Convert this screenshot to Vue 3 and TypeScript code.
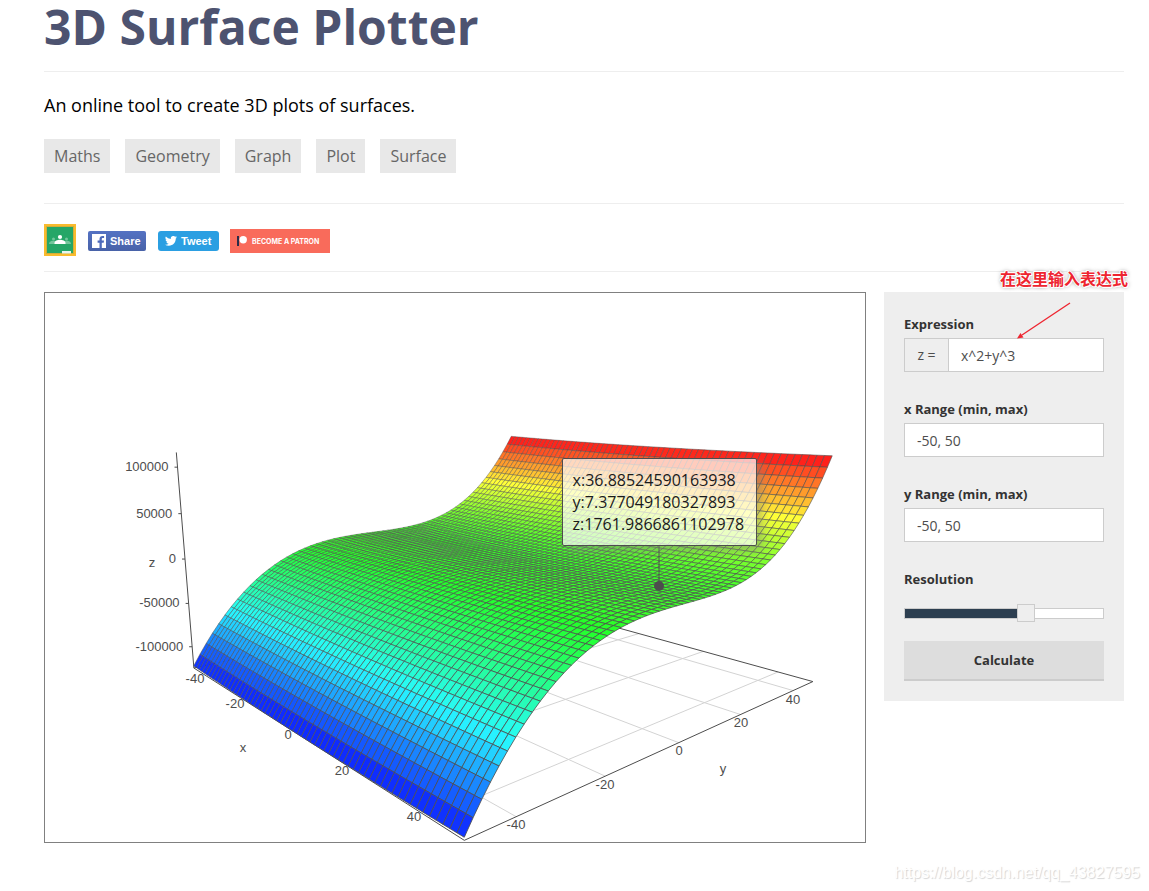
<script setup lang="ts">
import { computed, ref } from 'vue'

type Point = { x: number; y: number; depth: number }
type Cell = { points: string; fill: string; width: number; order: number }
type Line = { x1: number; y1: number; x2: number; y2: number }

const tags = ['Maths', 'Geometry', 'Graph', 'Plot', 'Surface']

const expression = ref('x^2+y^3')
const xRange = ref('-50, 50')
const yRange = ref('-50, 50')
const resolution = ref(62)

const fillStyle = computed(() => ({ '--fill': `${resolution.value}%` }))

const WIDTH = 820
const HEIGHT = 549
const STEPS = 60
const STEP = 100 / 61
const MIN = -50
const MAX = MIN + STEPS * STEP

function surface(x: number, y: number): number {
  return x * x + y * y * y
}

const Z_MIN = surface(0, MIN)
const Z_MAX = surface(MIN, MAX)

const camera = { horizontal: 0.85, vertical: 0.212, distance: 1.818 }

function project(x: number, y: number, z: number): Point {
  const s = Math.sin(camera.horizontal)
  const c = Math.cos(camera.horizontal)
  const sv = Math.sin(camera.vertical)
  const cv = Math.cos(camera.vertical)
  const px = (x - (MIN + MAX) / 2) / (MAX - MIN)
  const py = (y - (MIN + MAX) / 2) / (MAX - MIN)
  const pz = ((z - (Z_MIN + Z_MAX) / 2) / (Z_MAX - Z_MIN)) * 0.5
  const away = c * py - s * px
  const depth = camera.distance + cv * away - sv * pz
  return {
    x: WIDTH * 0.55 + ((c * px + s * py) / depth) * WIDTH,
    y: HEIGHT * 0.5 - ((cv * pz + sv * away) / depth) * WIDTH,
    depth,
  }
}

const palette = [
  [255, 8, 24],
  [255, 255, 56],
  [36, 255, 40],
  [40, 250, 255],
  [12, 20, 255],
]

function colour(z: number): string {
  const t = Math.min(3.999, Math.max(0, (1 - (z - Z_MIN) / (Z_MAX - Z_MIN)) * 4))
  const i = Math.floor(t)
  const mix = palette[i].map((v, k) => Math.round(v + (palette[i + 1][k] - v) * (t - i)))
  return `rgb(${mix.join(',')})`
}

const cells = computed<Cell[]>(() => {
  const list: Cell[] = []
  const at = (i: number) => MIN + i * STEP
  for (let i = 0; i < STEPS; i++) {
    for (let j = 0; j < STEPS; j++) {
      const corners = [
        [at(i), at(j)],
        [at(i + 1), at(j)],
        [at(i + 1), at(j + 1)],
        [at(i), at(j + 1)],
      ]
      const pts = corners.map(([x, y]) => project(x, y, surface(x, y)))
      const mean = corners.reduce((sum, [x, y]) => sum + surface(x, y), 0) / 4
      list.push({
        points: pts.map((p) => `${p.x.toFixed(2)},${p.y.toFixed(2)}`).join(' '),
        fill: colour(mean),
        width: 1 / pts[0].depth,
        order: project(at(i), at(j), Z_MIN).depth,
      })
    }
  }
  return list.sort((a, b) => b.order - a.order)
})

function floorLine(xa: number, ya: number, xb: number, yb: number): Line {
  const a = project(xa, ya, Z_MIN)
  const b = project(xb, yb, Z_MIN)
  return { x1: a.x, y1: a.y, x2: b.x, y2: b.y }
}

const gridLines = [-40, -20, 0, 20, 40].flatMap((v) => [
  floorLine(v, MIN, v, MAX),
  floorLine(MIN, v, MAX, v),
])

const top = project(MIN, MIN, Z_MAX)
const bottom = project(MIN, MIN, Z_MIN)
const axisLines: Line[] = [
  floorLine(MIN, MIN, MAX, MIN),
  floorLine(MIN, MAX, MAX, MAX),
  floorLine(MIN, MIN, MIN, MAX),
  floorLine(MAX, MIN, MAX, MAX),
  { x1: top.x, y1: top.y, x2: bottom.x, y2: bottom.y },
]

const zTicks = [100000, 50000, 0, -50000, -100000].map((value) => {
  const p = project(MIN, MIN, value)
  return { value, x: p.x, y: p.y }
})

const labels = [
  { text: '-40', x: 150, y: 390 },
  { text: '-20', x: 190, y: 415 },
  { text: '0', x: 243, y: 446 },
  { text: '20', x: 297, y: 482 },
  { text: '40', x: 369, y: 528 },
  { text: '-40', x: 471, y: 536 },
  { text: '-20', x: 560, y: 496 },
  { text: '0', x: 634, y: 462 },
  { text: '20', x: 696, y: 434 },
  { text: '40', x: 748, y: 411 },
  { text: 'x', x: 198, y: 459 },
  { text: 'y', x: 678, y: 480 },
  { text: 'z', x: 107, y: 274 },
]

const selected = { x: '36.88524590163938', y: '7.377049180327893', z: '1761.9866861102978' }
const marker = project(Number(selected.x), Number(selected.y), Number(selected.z))
</script>

<template>
  <div class="page">
    <header class="heading">
      <h1>3D Surface Plotter</h1>
    </header>

    <section class="intro">
      <p>An online tool to create 3D plots of surfaces.</p>
      <nav class="tags" aria-label="Tags">
        <a v-for="tag in tags" :key="tag" href="#">{{ tag }}</a>
      </nav>
    </section>

    <section class="social">
      <a class="classroom" href="#" aria-label="Share to Classroom">
        <svg viewBox="0 0 32 32" width="32" height="32">
          <rect width="32" height="32" fill="#f9bb2d" />
          <rect x="2" y="2" width="28" height="28" fill="#d3ae38" />
          <rect x="3" y="3" width="26" height="26" fill="#25a667" />
          <g fill="#72c69b">
            <circle cx="9.500" cy="15" r="1.500" />
            <circle cx="22.500" cy="15" r="1.500" />
            <path d="M5 20c0-2.500 2.500-3.200 4.500-3.200S13 18 13 20zM19 20c0-2 1.500-3.200 3.500-3.200S27 17.500 27 20z" />
          </g>
          <circle cx="16" cy="13" r="2.100" fill="#fff" />
          <path d="M10.500 20v-1c0-2.200 3-3.200 5.500-3.200s5.500 1 5.500 3.200v1z" fill="#fff" />
          <rect x="18" y="27" width="9" height="2.500" fill="#e8f5ee" />
        </svg>
      </a>
      <a class="facebook" href="#">
        <svg viewBox="0 0 14 14" width="14" height="14">
          <rect width="14" height="14" fill="#fff" />
          <path d="M7.500 14V8.700H5.600V6.600h1.900V5c0-2 1.200-3 3-3h1.600v2.100h-1.200c-.9 0-1.100.4-1.100 1.100v1.400h2.200l-.3 2.100H9.800V14z" fill="#4c69ba" />
        </svg>
        Share
      </a>
      <a class="twitter" href="#">
        <svg viewBox="0 0 24 20" width="12" height="10">
          <path d="M24 2.400a9.800 9.800 0 0 1-2.800.8A4.900 4.900 0 0 0 23.300.5a9.900 9.900 0 0 1-3.100 1.200 4.900 4.900 0 0 0-8.400 4.500A14 14 0 0 1 1.700 1a4.900 4.900 0 0 0 1.500 6.600A4.900 4.900 0 0 1 1 7v.1a4.900 4.900 0 0 0 3.900 4.800 5 5 0 0 1-2.200.1 4.900 4.900 0 0 0 4.600 3.400A9.900 9.900 0 0 1 0 17.500 14 14 0 0 0 7.500 19.700c9.100 0 14-7.500 14-14V5A10 10 0 0 0 24 2.400z" fill="#fff" />
        </svg>
        Tweet
      </a>
      <a class="patron" href="#">
        <svg viewBox="0 0 10 10" width="10" height="10">
          <rect width="2" height="10" fill="#2b2c49" />
          <circle cx="6.200" cy="3.800" r="3.700" fill="#fff" />
        </svg>
        BECOME A PATRON
      </a>
    </section>

    <main class="workspace">
      <figure class="plot">
        <svg class="canvas" :viewBox="`0 0 ${WIDTH} ${HEIGHT}`" role="img" aria-label="Surface plot">
          <line v-for="(l, i) in gridLines" :key="`g${i}`" v-bind="l" class="grid" />
          <line v-for="(l, i) in axisLines" :key="`a${i}`" v-bind="l" class="axis" />
          <g v-for="t in zTicks" :key="t.value">
            <line :x1="t.x - 3" :y1="t.y" :x2="t.x" :y2="t.y" class="axis" />
            <text :x="t.x - 9" :y="t.y + 4" class="end">{{ t.value }}</text>
          </g>
          <polygon
            v-for="(cell, i) in cells"
            :key="i"
            :points="cell.points"
            :fill="cell.fill"
            :stroke-width="cell.width"
            class="cell"
          />
          <text v-for="(l, i) in labels" :key="`l${i}`" :x="l.x" :y="l.y" class="middle">{{ l.text }}</text>
          <line :x1="marker.x" :y1="marker.y - 40" :x2="marker.x" :y2="marker.y" class="axis" />
          <circle :cx="marker.x" :cy="marker.y" r="5" fill="#4d4d4d" />
        </svg>
        <figcaption class="tooltip">
          <div v-for="(value, key) in selected" :key="key">{{ key }}:{{ value }}</div>
        </figcaption>
      </figure>

      <form class="panel" @submit.prevent>
        <div class="field">
          <label for="expression">Expression</label>
          <div class="prefixed">
            <span>z =</span>
            <input id="expression" v-model="expression" type="text" />
          </div>
        </div>
        <div class="field">
          <label for="x-range">x Range (min, max)</label>
          <input id="x-range" v-model="xRange" type="text" />
        </div>
        <div class="field">
          <label for="y-range">y Range (min, max)</label>
          <input id="y-range" v-model="yRange" type="text" />
        </div>
        <label for="resolution">Resolution</label>
        <input id="resolution" v-model.number="resolution" type="range" min="0" max="100" :style="fillStyle" />
        <button type="submit">Calculate</button>

        <div class="note">
          <span>在这里输入表达式</span>
          <svg viewBox="0 0 56 40" width="56" height="40" aria-hidden="true">
            <path d="M54 2L6 34" stroke="#ee2530" stroke-width="1.400" fill="none" />
            <path d="M1 37.500L4.500 32L7.500 36.500z" fill="#ee2530" />
          </svg>
        </div>
      </form>
    </main>

    <div class="watermark">https://blog.csdn.net/qq_43827595</div>
  </div>
</template>

<style>
body {
  margin: 0;
  background: #fff;
}
</style>

<style scoped>
.page {
  position: relative;
  padding: 0 25px 48px 44px;
  font-family: 'Open Sans', 'Noto Sans', sans-serif;
  color: #000;
}

.page,
.page * {
  box-sizing: border-box;
}

.heading {
  padding-bottom: 17px;
  border-bottom: 1px solid #eee;
}

h1 {
  margin: 0;
  font-size: 48px;
  line-height: 54px;
  font-weight: 700;
  color: #4d5370;
}

.intro {
  padding: 20px 0 30px;
  border-bottom: 1px solid #eee;
}

.intro p {
  margin: 0 0 20px;
  font-size: 18px;
  line-height: 27px;
}

.tags {
  display: flex;
  gap: 15px;
}

.tags a {
  padding: 0 10px;
  background: #e8e8e8;
  color: #666;
  font-size: 16px;
  line-height: 34px;
  text-decoration: none;
}

.social {
  display: flex;
  align-items: center;
  padding: 20px 0 15px;
  border-bottom: 1px solid #eee;
  font-family: 'Liberation Sans', Arial, sans-serif;
}

.social a {
  display: flex;
  align-items: center;
  color: #fff;
  font-size: 11px;
  font-weight: 700;
  text-decoration: none;
  white-space: nowrap;
}

.social svg {
  display: block;
}

.social .facebook {
  gap: 4px;
  width: 58px;
  height: 20px;
  margin: 2px 0 0 12px;
  padding-left: 4px;
  border-radius: 2px;
  background: linear-gradient(#5472c3, #4862a8);
}

.social .twitter {
  gap: 4px;
  width: 61px;
  height: 20px;
  margin: 2px 0 0 12px;
  padding-left: 7px;
  border-radius: 3px;
  background: #2b9fe2;
}

.social .patron {
  gap: 5px;
  width: 100px;
  height: 24px;
  margin: 2px 0 0 11px;
  padding-left: 7px;
  background: #f96b5b;
  font-family: Inter, 'Liberation Sans', sans-serif;
  font-size: 7px;
  font-weight: 700;
}

.workspace {
  display: flex;
  align-items: flex-start;
  gap: 18px;
  margin-top: 20px;
}

.plot {
  position: relative;
  flex: 1;
  min-width: 0;
  margin: 0;
  border: 1px solid #808080;
}

.canvas {
  display: block;
  width: 100%;
  font-family: 'Liberation Sans', Arial, sans-serif;
  font-size: 13px;
}

.canvas text {
  fill: #4d4d4d;
}

.end {
  text-anchor: end;
}

.middle {
  text-anchor: middle;
}

.grid {
  stroke: #d3d3d3;
}

.axis {
  stroke: #4d4d4d;
}

.cell {
  stroke: #4d4d4d;
  stroke-linejoin: bevel;
}

.tooltip {
  position: absolute;
  left: 63%;
  top: 30%;
  padding: 10px 12px 10px 10px;
  border: 1px solid #4d4d4d;
  border-radius: 2px;
  background: rgba(255, 255, 255, 0.7);
  box-shadow: 5px 5px 10px rgba(128, 128, 128, 0.5);
  color: #1a1a1a;
  font-size: 16px;
  line-height: 22px;
}

.panel {
  position: relative;
  width: 240px;
  padding: 20px;
  background: #eee;
}

.panel label {
  display: block;
  margin-bottom: 2px;
  color: #333;
  font-size: 13px;
  font-weight: 700;
  line-height: 24px;
}

.field {
  margin-bottom: 25px;
}

.panel input[type='text'] {
  display: block;
  width: 100%;
  min-width: 0;
  height: 34px;
  padding: 0 12px;
  border: 1px solid #ccc;
  border-radius: 0;
  background: #fff;
  color: #4d4d4d;
  font-family: inherit;
  font-size: 14px;
}

.prefixed {
  display: flex;
}

.prefixed span {
  flex: none;
  width: 44px;
  border: 1px solid #ccc;
  border-right: 0;
  color: #4d4d4d;
  font-size: 14px;
  line-height: 32px;
  text-align: center;
}

.panel input[type='range'] {
  display: block;
  width: 100%;
  height: 18px;
  margin: 13px 0 19px;
  appearance: none;
  background: transparent;
}

.panel input[type='range']::-webkit-slider-runnable-track {
  box-sizing: border-box;
  height: 11px;
  border: 1px solid #ccc;
  background: linear-gradient(to right, #2c3e50 var(--fill), #fff var(--fill));
}

.panel input[type='range']::-webkit-slider-thumb {
  box-sizing: border-box;
  width: 18px;
  height: 18px;
  margin-top: -5px;
  border: 1px solid #ccc;
  background: #eee;
  appearance: none;
}

.panel button {
  display: block;
  width: 100%;
  height: 40px;
  padding: 0;
  border: 0;
  border-bottom: 2px solid #ccc;
  background: #ddd;
  color: #333;
  font-family: inherit;
  font-size: 13px;
  font-weight: 700;
}

.note {
  position: absolute;
  top: -26px;
  right: -4px;
  color: #ee2530;
  font-family: 'Noto Sans CJK SC', sans-serif;
  font-size: 16px;
  font-weight: 700;
  line-height: 24px;
  white-space: nowrap;
  text-shadow: 1px 0 #fff, -1px 0 #fff, 0 1px #fff, 0 -1px #fff, 1px 1px #fff, -1px -1px #fff, 0 0 4px #666;
}

.note svg {
  position: absolute;
  left: 16px;
  top: 35px;
}

.watermark {
  position: absolute;
  right: 9px;
  bottom: 8px;
  color: #fff;
  font-family: 'Liberation Sans', Arial, sans-serif;
  font-size: 16px;
  line-height: 20px;
  text-shadow: 1px 1px 1px #d4d4d4;
}
</style>
